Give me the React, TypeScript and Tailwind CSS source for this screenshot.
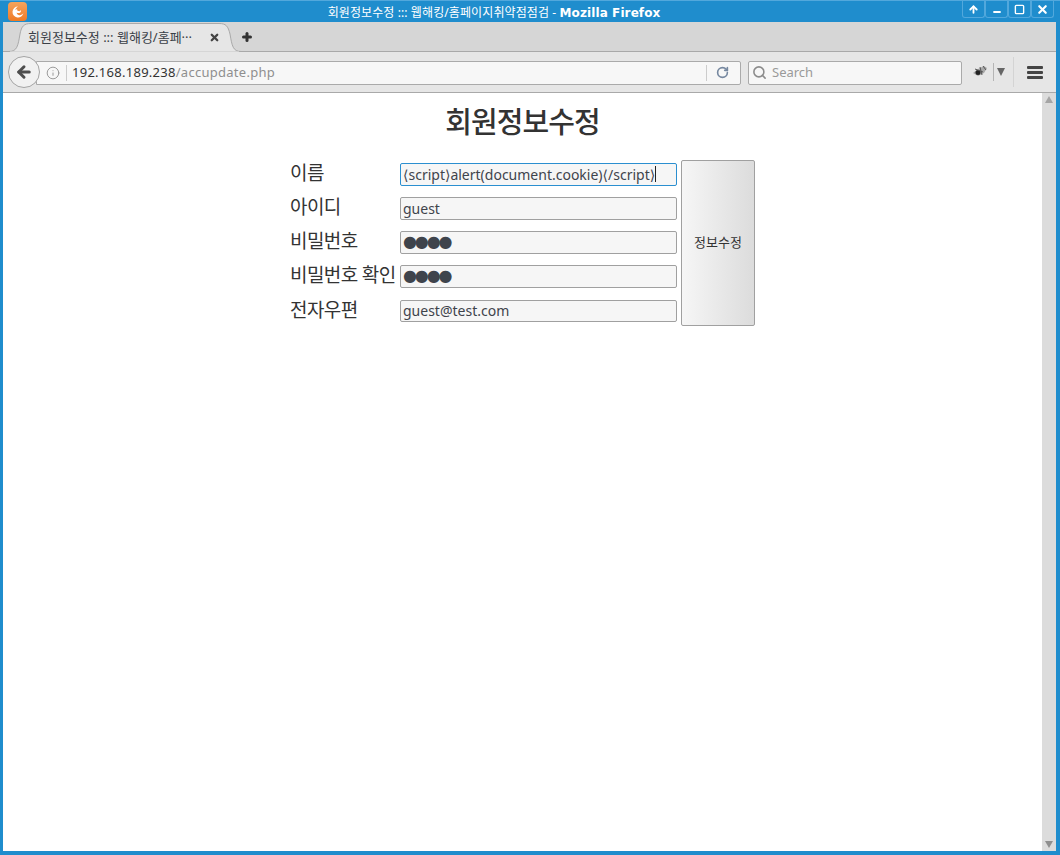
import { ArrowUp, Minus, Square, X, Plus, ArrowLeft, Info, RotateCw, Search } from "lucide-react";

const FONT = "font-['Noto_Sans','Noto_Sans_CJK_KR',sans-serif]";

const WindowButton = ({ children }: { children: React.ReactNode }) => (
  <div className="w-[23px] h-[17px] flex items-center justify-center border border-t-0 border-[#52a8dc] rounded-b-[3px] text-white">
    {children}
  </div>
);

const TitleBar = () => (
  <div className="h-[19px] mt-[3px] flex items-center relative">
    <div className="absolute left-[5px] top-[-1px] w-[19px] h-[19px] rounded-[4px] bg-gradient-to-b from-[#f5a45c] to-[#ef7a22] flex items-center justify-center">
      <svg width="14" height="14" viewBox="0 0 14 14">
        <path d="M7 1.500a5.500 5.500 0 1 0 5.400 6.600c-.9 1.600-2.500 2.400-4.200 2.100-1.600-.3-2.600-1.500-2.500-2.700.7.7 2.200.8 3.200.2 1-.6 1.400-1.700 1-2.800-.5 1-1.400 1.400-2.400 1.200C6.600 5.900 6 5.200 6.200 4.200 5.400 4 4.600 4.400 4.200 5c.2-1.300 1.400-2.300 2.800-3.500z" fill="#fff" />
      </svg>
    </div>
    <div className={`flex-1 text-center text-[12px] tracking-[0.1px] text-white whitespace-nowrap ${FONT} pr-[71px]`}>
      회원정보수정 ::: 웹해킹/홈페이지취약점점검 - <span className="font-['DejaVu_Sans'] font-bold">Mozilla Firefox</span>
    </div>
    <div className="absolute right-[2px] top-[-2px] flex">
      <WindowButton><ArrowUp size={11} strokeWidth={4} /></WindowButton>
      <WindowButton><Minus size={10} strokeWidth={5} className="mt-[5px]" /></WindowButton>
      <WindowButton><Square size={11} strokeWidth={3} /></WindowButton>
      <WindowButton><X size={13} strokeWidth={4} /></WindowButton>
    </div>
  </div>
);

const TabStrip = () => (
  <div className="h-[30px] bg-[#d6d6d6] border-b border-[#a9a9a9] relative">
    <svg className="absolute left-0 top-0" width="245" height="30" viewBox="0 0 245 30">
      <path d="M0 29.500H6C14 29.500 15 24 17 12C18.500 4 21 1.500 28 1.500H216C223 1.500 225 4 227 12C229 24 230 29.500 238 29.500H245V31H0Z" fill="#e6e6e6" stroke="#a9a9a9" />
      <rect x="0" y="29.500" width="245" height="1" fill="#a9a9a9" />
      <path d="M7 29.500H236V31H7Z" fill="#e6e6e6" />
    </svg>
    <div className={`absolute left-[25px] top-[6px] text-[13px] leading-[18px] text-[#3a3f47] whitespace-nowrap ${FONT}`}>
      회원정보수정 ::: 웹해킹/홈페···
    </div>
    <X size={11} strokeWidth={5} className="absolute left-[206px] top-[10px] text-[#444]" />
    <Plus size={12} strokeWidth={6} className="absolute left-[238px] top-[9px] text-[#333]" />
  </div>
);

const Toolbar = () => (
  <div className={`h-[41px] bg-[#e6e6e6] border-b border-[#a9a9a9] flex items-center relative ${FONT}`}>
    <div className="ml-[33px] mt-[1px] h-[24px] w-[705px] bg-[#f7f7f7] border border-[#aaa] rounded-r-[2px] flex items-center">
      <Info size={14} strokeWidth={1.5} className="ml-[9px] text-[#8e8e8e]" />
      <div className="ml-[6px] h-[16px] w-px bg-[#ccc]" />
      <div className="ml-[5px] flex-1 text-[13px] tracking-[0.27px] text-[#333]">
        192.168.189.238<span className="text-[#8f8f8f]">/accupdate.php</span>
      </div>
      <div className="h-[16px] w-px bg-[#ccc]" />
      <RotateCw size={13} strokeWidth={3} className="ml-[9px] mr-[11px] text-[#7688a0]" />
    </div>
    <div className="absolute left-[5px] top-[4px] w-[32px] h-[32px] rounded-full bg-[#f1f1f1] border border-[#a4a4a4] flex items-center justify-center">
      <ArrowLeft size={18} strokeWidth={4} className="text-[#4d4d4d]" />
    </div>
    <div className="ml-[7px] mt-[1px] h-[24px] w-[214px] bg-[#f7f7f7] border border-[#aaa] rounded-[2px] flex items-center">
      <Search size={15} strokeWidth={2.5} className="ml-[3px] text-[#8c8c8c]" />
      <span className="ml-[5px] text-[13px] text-[#9a9a9a]">Search</span>
    </div>
    <svg className="ml-[10px] mt-[-2px]" width="16" height="13" viewBox="0 0 16 13">
      <path d="M1 8L6 4L12 1L15 3L12 8L6 11Z" fill="#a8a8a8" />
      <circle cx="6" cy="7.500" r="2.500" fill="#222" />
      <path d="M8 2L10 10M3 4L11 7M11 1L14 5" stroke="#555" strokeWidth="1" />
    </svg>
    <div className="ml-[5px] h-[18px] w-px bg-[#b5b5b5]" />
    <svg className="ml-[3px]" width="8" height="8" viewBox="0 0 8 8"><path d="M0 0H8L4 8Z" fill="#666" /></svg>
    <div className="ml-[8px] h-[30px] w-px bg-[#d4d4d4]" />
    <div className="ml-[13px] flex flex-col gap-[2px]">
      <div className="w-[16px] h-[3px] rounded-[1px] bg-[#444]" />
      <div className="w-[16px] h-[3px] rounded-[1px] bg-[#444]" />
      <div className="w-[16px] h-[3px] rounded-[1px] bg-[#444]" />
    </div>
  </div>
);

const rows = [
  { label: "이름", value: "⟨script⟩alert(document.cookie)⟨/script⟩", focused: true, h: "h-[23px]", mb: "mb-[11px]" },
  { label: "아이디", value: "guest", h: "h-[23px]", mb: "mb-[11px]" },
  { label: "비밀번호", value: "●●●●", dots: true, h: "h-[23px]", mb: "mb-[11px]" },
  { label: "비밀번호 확인", value: "●●●●", dots: true, h: "h-[23px]", mb: "mb-[12px]" },
  { label: "전자우편", value: "guest@test.com", h: "h-[22px]", mb: "" },
];

const FormRow = ({ row }: { row: (typeof rows)[number] }) => (
  <div className={`flex items-center ${row.h} ${row.mb}`}>
    <div className="w-[110px] text-[19px] leading-[23px] tracking-[-0.6px] whitespace-nowrap text-[#333] -mt-[2px]">{row.label}</div>
    <div
      className={`w-[277px] ${row.h} rounded-[2px] bg-[#f6f6f6] pl-[2px] flex items-center text-[#3f444c] whitespace-nowrap overflow-hidden border ${
        row.focused ? "border-[#2b8fd0]" : "border-[#a0a0a0]"
      } ${row.dots ? "text-[16px] tracking-[-2.1px] pb-[1px] font-['DejaVu_Sans']" : "text-[14px] pb-[1px]"}`}
    >
      {row.focused ? (
        <span className="flex items-center">
          <span className="font-['Noto_Sans','DejaVu_Sans']">{row.value}</span>
          <span className="w-px h-[16px] bg-[#222]" />
        </span>
      ) : (
        row.value
      )}
    </div>
  </div>
);

export default function App() {
  return (
    <div className={`w-[1060px] h-[855px] bg-[#1f8dcd] border-t border-[#52a8dc] pl-[3px] pr-[4px] pb-[4px] flex flex-col overflow-hidden ${FONT}`}>
      <div className="-mt-px">
        <TitleBar />
      </div>
      <TabStrip />
      <Toolbar />
      <div className="flex-1 flex min-h-0 bg-white">
        <div className="flex-1 flex flex-col items-center">
          <h1 className="mt-[11px] h-[35px] text-[29px] leading-[35px] font-medium tracking-[-0.9px] text-[#333] whitespace-nowrap">회원정보수정</h1>
          <div className="mt-[21px] flex items-start">
            <div className="pt-[3px]">
              {rows.map((row) => (
                <FormRow key={row.label} row={row} />
              ))}
            </div>
            <button className="ml-[4px] w-[74px] h-[166px] rounded-[2px] border border-[#a0a0a0] bg-gradient-to-r from-[#f6f6f6] to-[#dcdcdc] text-[13px] text-[#333]">
              정보수정
            </button>
          </div>
        </div>
        <div className="w-[14px] bg-[#dcdcdc] flex flex-col items-center justify-between py-[3px]">
          <svg width="8" height="7" viewBox="0 0 8 7"><path d="M4 0L8 7H0Z" fill="#a5a5a5" /></svg>
          <svg width="8" height="7" viewBox="0 0 8 7"><path d="M4 7L8 0H0Z" fill="#8f8f8f" /></svg>
        </div>
      </div>
    </div>
  );
}
